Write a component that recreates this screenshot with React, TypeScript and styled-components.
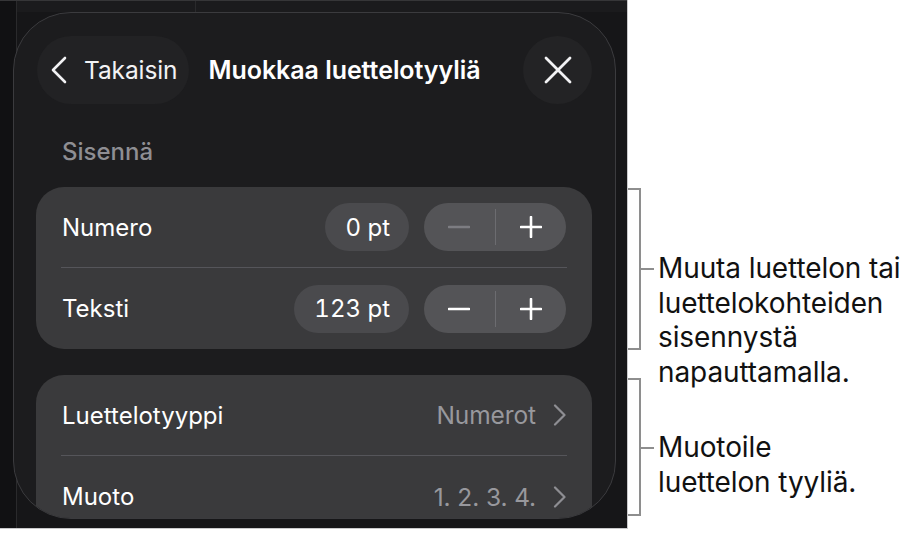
import styled, { createGlobalStyle } from "styled-components";

const GlobalStyle = createGlobalStyle`
  html, body {
    margin: 0;
    padding: 0;
    background: #ffffff;
  }
  body {
    font-family: Inter, "Noto Sans", sans-serif;
    -webkit-font-smoothing: antialiased;
  }
`;

const Page = styled.div`
  display: flex;
  width: 907px;
  height: 535px;
  overflow: hidden;
`;

const Screen = styled.div`
  box-sizing: border-box;
  flex: 0 0 628px;
  height: 529px;
  padding: 12px 0 0 13px;
  border-right: 1px solid #c9c9cb;
  border-bottom: 1px solid #c9c9cb;
  overflow: hidden;
  background:
    linear-gradient(#363638, #363638) 0 0 / 100% 1px no-repeat,
    linear-gradient(#2a2a2c, #2a2a2c) 16px 0 / 1px 100% no-repeat,
    linear-gradient(#2a2a2c, #2a2a2c) 195px 0 / 1px 12px no-repeat,
    linear-gradient(#1b1b1d, #1b1b1d) 17px 0 / 100% 12px no-repeat,
    linear-gradient(#111113, #111113) 0 0 / 16px 100% no-repeat,
    #161618;
`;

const Popover = styled.div`
  box-sizing: border-box;
  width: 603px;
  height: 507px;
  padding: 23px 23px 0 22px;
  border: 1px solid #3b3b3e;
  border-radius: 58px;
  background: #1c1c1e;
  overflow: hidden;
  display: flex;
  flex-direction: column;
`;

const Header = styled.div`
  display: flex;
  align-items: center;
  height: 68px;
  flex: 0 0 68px;
`;

const BackButton = styled.div`
  display: flex;
  align-items: center;
  gap: 16px;
  height: 68px;
  margin-left: 1px;
  padding: 0 12px 0 13px;
  border-radius: 34px;
  background: #222224;
  color: #f2f2f4;
  font-size: 24.5px;
  letter-spacing: -0.1px;
`;

const Title = styled.div`
  flex: 1;
  margin-left: 19px;
  color: #ffffff;
  font-size: 25px;
  font-weight: 600;
  letter-spacing: -0.05px;
`;

const CloseButton = styled.div`
  display: flex;
  align-items: center;
  justify-content: center;
  width: 69px;
  height: 68px;
  border-radius: 50%;
  background: #232325;
`;

const SectionLabel = styled.div`
  padding: 35px 0 0 26px;
  margin-bottom: 22px;
  line-height: 26px;
  font-size: 24px;
  font-weight: 500;
  color: #8e8e93;
`;

const Card = styled.div<{ $gap?: number }>`
  flex: 0 0 auto;
  margin-top: ${(p) => p.$gap ?? 0}px;
  border-radius: 28px;
  background: #3a3a3c;
`;

const Row = styled.div<{ $divider?: boolean }>`
  position: relative;
  display: flex;
  align-items: center;
  height: ${(p) => (p.$divider ? 80 : 81)}px;
  padding: 0 26px;
  border-bottom: ${(p) => (p.$divider ? "1px solid transparent" : "none")};

  &::after {
    content: "";
    display: ${(p) => (p.$divider ? "block" : "none")};
    position: absolute;
    left: 25px;
    right: 25px;
    bottom: -1px;
    height: 1px;
    background: #55555a;
  }
`;

const RowLabel = styled.div`
  flex: 1;
  color: #ffffff;
  font-size: 24px;
`;

const ValuePill = styled.div`
  display: flex;
  align-items: center;
  height: 48px;
  padding: 0 19px 0 20px;
  margin-right: 15px;
  border-radius: 24px;
  background: #4a4a4d;
  color: #ffffff;
  font-size: 24px;
  font-variant-numeric: tabular-nums;
`;

const Stepper = styled.div`
  display: flex;
  align-items: center;
  width: 142px;
  height: 48px;
  border-radius: 24px;
  background: #545457;
`;

const StepHalf = styled.div`
  flex: 1;
  display: flex;
  align-items: center;
  justify-content: center;
`;

const StepDivider = styled.div`
  width: 1px;
  height: 36px;
  background: #6c6c70;
`;

const DetailValue = styled.div`
  display: flex;
  align-items: center;
  gap: 17px;
  color: #98989d;
  font-size: 24.5px;
  letter-spacing: -0.1px;
`;

const Notes = styled.div`
  display: flex;
  flex-direction: column;
  padding-top: 188px;
`;

const NoteGroup = styled.div<{ $height: number; $gap?: number }>`
  display: flex;
  align-items: flex-start;
  height: ${(p) => p.$height}px;
  margin-top: ${(p) => p.$gap ?? 0}px;
`;

const Bracket = styled.div<{ $tick: number }>`
  position: relative;
  box-sizing: border-box;
  flex: 0 0 13px;
  height: 100%;
  border: 2px solid #8e8e8e;
  border-left: none;

  &::after {
    content: "";
    position: absolute;
    left: 11px;
    top: ${(p) => p.$tick - 3}px;
    width: 15px;
    height: 2px;
    background: #8e8e8e;
  }
`;

const NoteText = styled.div<{ $offset: number }>`
  margin: ${(p) => p.$offset}px 0 0 17px;
  color: #111111;
  font-size: 28px;
  line-height: 34.5px;
  letter-spacing: -0.1px;
  white-space: nowrap;
`;

const stroke = { fill: "none", strokeLinecap: "round" as const, strokeLinejoin: "round" as const };

const ChevronLeft = () => (
  <svg width="18" height="28" viewBox="0 0 18 28">
    <path d="M15 2 L3 14 L15 26" stroke="#f2f2f4" strokeWidth="2.6" {...stroke} />
  </svg>
);

const CloseIcon = () => (
  <svg width="28" height="28" viewBox="0 0 28 28">
    <path d="M2 2 L26 26 M26 2 L2 26" stroke="#f2f2f4" strokeWidth="2.8" {...stroke} />
  </svg>
);

const MinusIcon = ({ color }: { color: string }) => (
  <svg width="22" height="22" viewBox="0 0 22 22">
    <path d="M1 11 H21" stroke={color} strokeWidth="2.6" {...stroke} />
  </svg>
);

const PlusIcon = () => (
  <svg width="22" height="22" viewBox="0 0 22 22">
    <path d="M1 11 H21 M11 1 V21" stroke="#ffffff" strokeWidth="2.6" {...stroke} />
  </svg>
);

const ChevronRight = () => (
  <svg width="13" height="22" viewBox="0 0 13 22">
    <path d="M2 1.5 L11.5 11 L2 20.5" stroke="#8e8e93" strokeWidth="2.2" {...stroke} />
  </svg>
);

const indentRows = [
  { label: "Numero", value: "0 pt", canDecrease: false },
  { label: "Teksti", value: "123 pt", canDecrease: true },
];

const styleRows = [
  { label: "Luettelotyyppi", value: "Numerot" },
  { label: "Muoto", value: "1. 2. 3. 4." },
];

export default function App() {
  return (
    <Page>
      <GlobalStyle />
      <Screen>
        <Popover>
          <Header>
            <BackButton>
              <ChevronLeft />
              Takaisin
            </BackButton>
            <Title>Muokkaa luettelotyyliä</Title>
            <CloseButton>
              <CloseIcon />
            </CloseButton>
          </Header>

          <SectionLabel>Sisennä</SectionLabel>

          <Card>
            {indentRows.map((r, i) => (
              <Row key={r.label} $divider={i === 0}>
                <RowLabel>{r.label}</RowLabel>
                <ValuePill>{r.value}</ValuePill>
                <Stepper>
                  <StepHalf>
                    <MinusIcon color={r.canDecrease ? "#ffffff" : "#7d7d82"} />
                  </StepHalf>
                  <StepDivider />
                  <StepHalf>
                    <PlusIcon />
                  </StepHalf>
                </Stepper>
              </Row>
            ))}
          </Card>

          <Card $gap={26}>
            {styleRows.map((r, i) => (
              <Row key={r.label} $divider={i === 0}>
                <RowLabel>{r.label}</RowLabel>
                <DetailValue>
                  {r.value}
                  <ChevronRight />
                </DetailValue>
              </Row>
            ))}
          </Card>
        </Popover>
      </Screen>

      <Notes>
        <NoteGroup $height={162}>
          <Bracket $tick={81} />
          <NoteText $offset={63}>
            Muuta luettelon tai
            <br />
            luettelokohteiden
            <br />
            sisennystä
            <br />
            napauttamalla.
          </NoteText>
        </NoteGroup>
        <NoteGroup $height={138} $gap={28}>
          <Bracket $tick={70} />
          <NoteText $offset={52}>
            Muotoile
            <br />
            luettelon tyyliä.
          </NoteText>
        </NoteGroup>
      </Notes>
    </Page>
  );
}
